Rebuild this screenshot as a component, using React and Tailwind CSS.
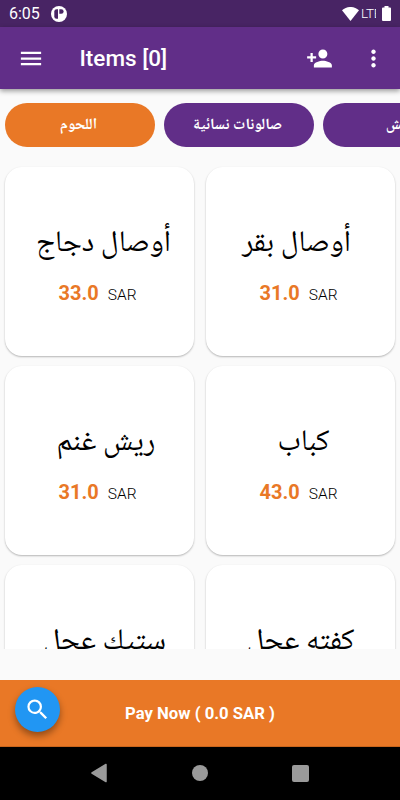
import { MdMenu, MdPersonAddAlt1, MdMoreVert, MdSearch } from 'react-icons/md';

const categories = [
  { id: 1, name: 'اللحوم', active: true, pad: 'pr-[2px]' },
  { id: 2, name: 'صالونات نسائية', active: false, pad: 'pr-[2px]' },
  { id: 3, name: 'عيش', active: false, pad: 'pl-[6px]' }
];

const items = [
  { id: 1, name: 'أوصال دجاج', price: '33.0', pad: 'pl-[8px]' },
  { id: 2, name: 'أوصال بقر', price: '31.0', pad: 'pr-[8px]' },
  { id: 3, name: 'ريش غنم', price: '31.0', pad: 'pl-[13px]' },
  { id: 4, name: 'كباب', price: '43.0', pad: 'pl-[6px]' },
  { id: 5, name: 'ستيك عجل', price: '45.0', pad: 'pl-[10px]' },
  { id: 6, name: 'كفته عجل', price: '38.0', pad: 'pl-0' }
];

function StatusBar() {
  return (
    <div className="flex h-[27px] shrink-0 items-center bg-[#482464] pl-[9px] pr-[9px] text-white">
      <span className="pt-px text-[16px] leading-none">6:05</span>
      <svg className="ml-[11.5px] h-4 w-4" viewBox="0 0 16 16">
        <circle cx="8" cy="8" r="8" fill="#fff" />
        <path d="M7 3.2H5.6A2.3 2.3 0 0 0 3.3 5.5V10.5A2.3 2.3 0 0 0 5.6 12.8H7Z" fill="#482464" />
        <path d="M8.3 3.2H10.3A2.3 2.3 0 0 1 10.3 7.8H8.3Z" fill="#482464" />
      </svg>
      <div className="flex-1" />
      <svg className="h-[14px] w-[17px]" viewBox="0 0 17 14">
        <path d="M0 3.2C5 -1.1 12 -1.1 17 3.2L8.5 14Z" fill="#fff" />
      </svg>
      <span className="ml-[2px] h-[15px] w-[15px] overflow-hidden whitespace-nowrap text-[13.5px] font-light leading-[15px] tracking-[-0.3px]">LTE</span>
      <svg className="ml-[6px] h-[15px] w-[9px]" viewBox="0 0 9 15">
        <path d="M2.5 0H6.5V1.5H8Q9 1.5 9 2.5V14Q9 15 8 15H1Q0 15 0 14V2.5Q0 1.5 1 1.5H2.5Z" fill="#fff" />
      </svg>
    </div>
  );
}

function AppBar() {
  return (
    <header className="z-10 flex h-[62px] shrink-0 items-center bg-[#612e88] pl-[17px] pr-[13px] text-white shadow-[0_2px_5px_rgba(0,0,0,0.4)]">
      <MdMenu className="h-[27px] w-[28px]" />
      <h1 className="ml-[34.5px] flex-1 pt-px text-[22.5px] font-medium leading-none">Items [0]</h1>
      <MdPersonAddAlt1 className="mr-[27px] h-[27px] w-[27px] -scale-x-100" />
      <MdMoreVert className="h-[27px] w-[27px]" />
    </header>
  );
}

function Category({ category }) {
  return (
    <button
      className={`h-11 w-[150px] shrink-0 rounded-full font-['Noto_Naskh_Arabic','DejaVu_Sans',serif] text-[15.5px] font-bold leading-none text-white ${
        category.active ? 'bg-[#e97826]' : 'bg-[#612e88]'
      } ${category.pad}`}
    >
      {category.name}
    </button>
  );
}

function ItemCard({ item }) {
  return (
    <div className="flex h-[189px] flex-col items-center rounded-[17px] bg-white pt-[56px] shadow-[0_1px_2px_rgba(0,0,0,0.28)]">
      <h2
        dir="rtl"
        className={`h-[44px] whitespace-nowrap font-['Noto_Naskh_Arabic','DejaVu_Sans',serif] text-[30px] leading-[44px] text-black ${item.pad}`}
      >
        {item.name}
      </h2>
      <div className="mt-[14px] flex items-baseline gap-[9px] pr-[4px] leading-6">
        <span className="text-[20px] font-bold text-[#e97826]">{item.price}</span>
        <span className="text-[15.5px] font-light text-black">SAR</span>
      </div>
    </div>
  );
}

export default function App() {
  return (
    <div className="flex h-[800px] w-[400px] flex-col overflow-hidden bg-[#fafafa] font-[Roboto,sans-serif]">
      <StatusBar />
      <AppBar />

      <div className="mt-[14.4px] flex h-[44.6px] shrink-0 gap-[9px] overflow-hidden pl-[4.5px]">
        {categories.map((c) => (
          <Category key={c.id} category={c} />
        ))}
      </div>

      <main className="mt-[18px] h-[483px] shrink-0 overflow-hidden px-[5px] pt-[1px]">
        <div className="grid grid-cols-2 gap-x-[12px] gap-y-[10px]">
          {items.map((item) => (
            <ItemCard key={item.id} item={item} />
          ))}
        </div>
      </main>

      <footer className="relative mt-[31px] flex h-[67px] shrink-0 items-center justify-center border-b border-[#c9651c] bg-[#e97826] pt-[2px] text-[16.7px] font-bold text-white">
        Pay Now ( 0.0 SAR )
        <button className="absolute left-[15px] top-[7px] flex h-[45px] w-[45px] items-center justify-center rounded-full bg-[#2196f3] shadow-[0_4px_7px_rgba(0,0,0,0.38)]">
          <MdSearch className="h-[27px] w-[27px]" />
        </button>
      </footer>

      <nav className="flex h-[53px] shrink-0 items-center justify-between bg-black px-[91px]">
        <svg className="h-5 w-4" viewBox="0 0 16 20">
          <path d="M15 1.5L1 10L15 18.5Z" fill="#9a9a9a" stroke="#9a9a9a" strokeWidth="1.5" strokeLinejoin="round" />
        </svg>
        <div className="h-4 w-4 rounded-full bg-[#9a9a9a]" />
        <div className="h-[17px] w-[17px] rounded-[2px] bg-[#9a9a9a]" />
      </nav>
    </div>
  );
}
